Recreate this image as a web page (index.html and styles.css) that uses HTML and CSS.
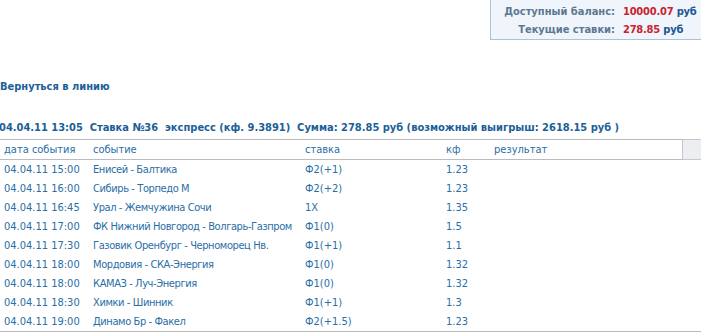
FILE: index.html
```html
<!DOCTYPE html>
<html lang="ru">
<head>
<meta charset="utf-8">
<link rel="stylesheet" href="styles.css">
</head>
<body>
<div class="top">
  <div class="balance">
    <table class="bal-table">
      <tr><td class="bal-label">Доступный баланс:</td><td class="bal-val"><span class="money">10000.07</span> <span class="cur">руб</span></td></tr>
      <tr><td class="bal-label">Текущие ставки:</td><td class="bal-val"><span class="money">278.85</span> <span class="cur">руб</span></td></tr>
    </table>
  </div>
</div>
<div class="back">Вернуться в линию</div>
<div class="bet-title">04.04.11 13:05&nbsp; Ставка №36&nbsp; экспресс (кф. 9.3891)&nbsp; Сумма: 278.85 руб (возможный выигрыш: 2618.15 руб )</div>
<table class="bets">
  <thead>
    <tr><th class="c-date">дата события</th><th class="c-ev">событие</th><th class="c-st">ставка</th><th class="c-kf">кф</th><th class="c-res">результат</th><th class="c-btn"></th></tr>
  </thead>
  <tbody>
    <tr><td>04.04.11 15:00</td><td class="ev">Енисей - Балтика</td><td>Ф2(+1)</td><td>1.23</td><td></td><td></td></tr>
    <tr><td>04.04.11 16:00</td><td class="ev">Сибирь - Торпедо М</td><td>Ф2(+2)</td><td>1.23</td><td></td><td></td></tr>
    <tr><td>04.04.11 16:45</td><td class="ev">Урал - Жемчужина Сочи</td><td>1X</td><td>1.35</td><td></td><td></td></tr>
    <tr><td>04.04.11 17:00</td><td class="ev">ФК Нижний Новгород - Волгарь-Газпром</td><td>Ф1(0)</td><td>1.5</td><td></td><td></td></tr>
    <tr><td>04.04.11 17:30</td><td class="ev">Газовик Оренбург - Черноморец Нв.</td><td>Ф1(+1)</td><td>1.1</td><td></td><td></td></tr>
    <tr><td>04.04.11 18:00</td><td class="ev">Мордовия - СКА-Энергия</td><td>Ф1(0)</td><td>1.32</td><td></td><td></td></tr>
    <tr><td>04.04.11 18:00</td><td class="ev">КАМАЗ - Луч-Энергия</td><td>Ф1(0)</td><td>1.32</td><td></td><td></td></tr>
    <tr><td>04.04.11 18:30</td><td class="ev">Химки - Шинник</td><td>Ф1(+1)</td><td>1.3</td><td></td><td></td></tr>
    <tr><td>04.04.11 19:00</td><td class="ev">Динамо Бр - Факел</td><td>Ф2(+1.5)</td><td>1.23</td><td></td><td></td></tr>
  </tbody>
</table>
</body>
</html>
```
FILE: styles.css
```css
html, body {
  margin: 0;
  padding: 0;
  background: #fff;
}
body {
  font-family: "DejaVu Sans Condensed", "DejaVu Sans", sans-serif;
  font-size: 11px;
  color: #2a6ea6;
  width: 701px;
  overflow: hidden;
}
.top {
  display: flex;
  justify-content: flex-end;
  height: 41px;
}
.balance {
  width: 221px;
  height: 40px;
  margin-right: -10px;
  background: #eff5fb;
  border-left: 1px solid #a9c3db;
  border-bottom: 1px solid #a9c3db;
  box-sizing: border-box;
}
.bal-table {
  border-collapse: collapse;
  margin-top: 3px;
  font-weight: bold;
}
.bal-table td {
  padding: 0;
  height: 18px;
  line-height: 18px;
}
.bal-label {
  width: 124px;
  text-align: right;
  color: #5d7892;
  padding-right: 8px !important;
}
.bal-val {
  text-align: left;
  white-space: nowrap;
  letter-spacing: -0.2px;
}
.money { color: #c8232f; }
.cur { color: #1d5592; }
.back {
  margin-top: 37px;
  font-weight: bold;
  color: #1c5f98;
  line-height: 18px;
}
.bet-title {
  margin-top: 23px;
  margin-left: -1px;
  font-weight: bold;
  color: #1c5f98;
  line-height: 18px;
  white-space: nowrap;
}
.bets {
  width: 701px;
  border-collapse: collapse;
  margin-top: 2px;
  table-layout: fixed;
}
.bets th {
  font-weight: normal;
  text-align: left;
  height: 19px;
  padding: 0 0 0 4px;
  border-top: 1px solid #bcbcbc;
  border-bottom: 1px solid #bcbcbc;
  color: #2a6ea6;
}
.bets td {
  height: 19px;
  padding: 0 0 0 4px;
  white-space: nowrap;
}
.bets td.ev {
  letter-spacing: -0.4px;
}
.bets tbody tr:last-child td {
  border-bottom: 1px solid #bcbcbc;
}
.c-date { width: 85px; }
.c-ev { width: 208px; }
.c-st { width: 137px; }
.c-kf { width: 44px; }
.c-res { width: 188px; }
.bets th.c-btn {
  padding: 0;
  background: #eceef2;
  border: 1px solid #c4c8cf;
  border-right: none;
}
```
